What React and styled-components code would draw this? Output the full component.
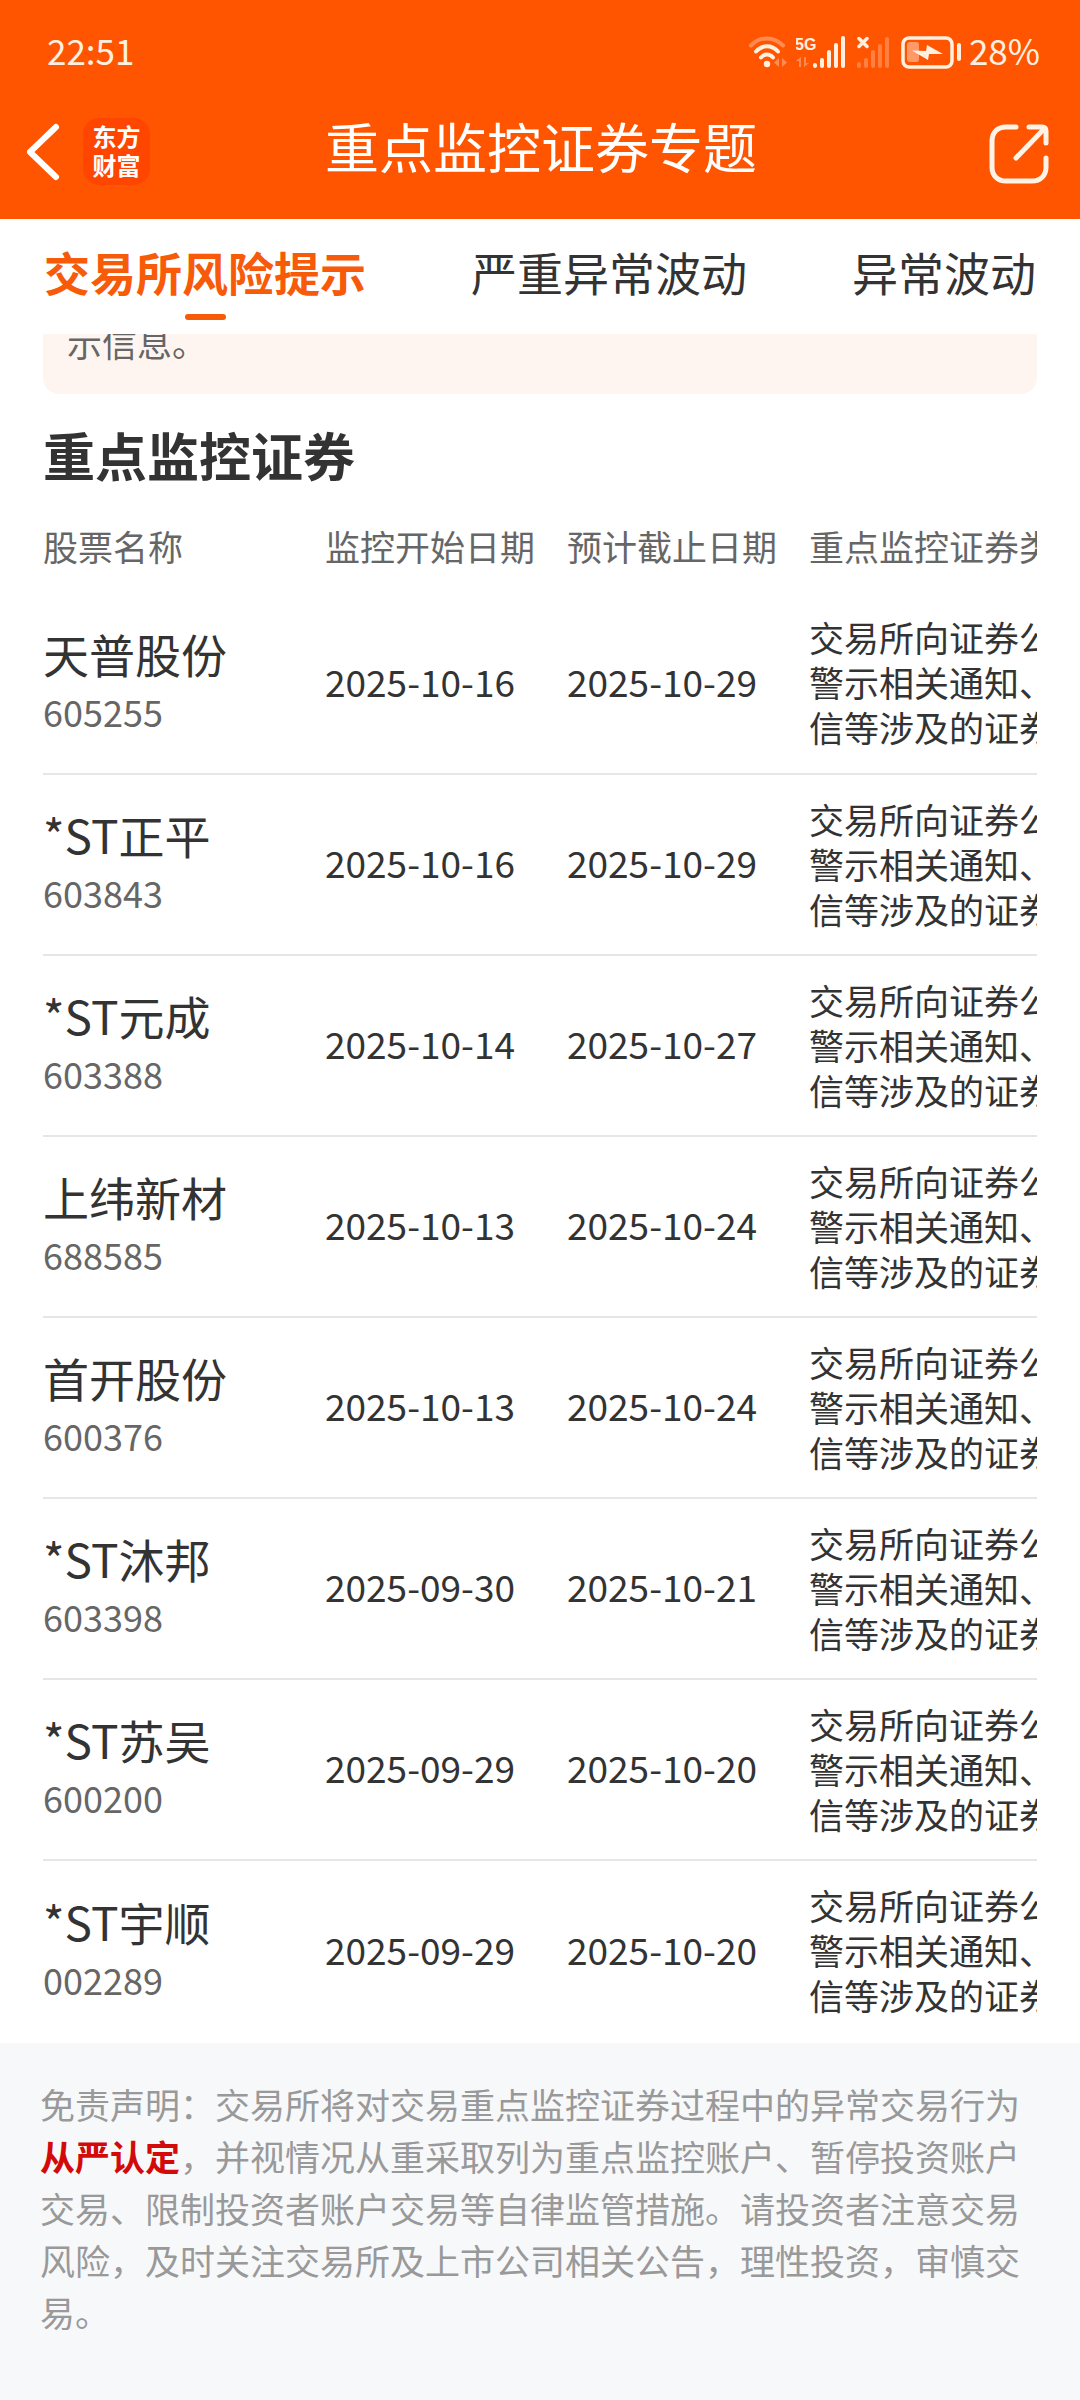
import React, { useState } from 'react';
import styled, { createGlobalStyle } from 'styled-components';

const TABS = ['交易所风险提示', '严重异常波动', '异常波动'];

const STOCKS = [
  { name: '天普股份', code: '605255', start: '2025-10-16', end: '2025-10-29' },
  { name: '*ST正平', code: '603843', start: '2025-10-16', end: '2025-10-29' },
  { name: '*ST元成', code: '603388', start: '2025-10-14', end: '2025-10-27' },
  { name: '上纬新材', code: '688585', start: '2025-10-13', end: '2025-10-24' },
  { name: '首开股份', code: '600376', start: '2025-10-13', end: '2025-10-24' },
  { name: '*ST沐邦', code: '603398', start: '2025-09-30', end: '2025-10-21' },
  { name: '*ST苏吴', code: '600200', start: '2025-09-29', end: '2025-10-20' },
  { name: '*ST宇顺', code: '002289', start: '2025-09-29', end: '2025-10-20' },
];

const WifiIcon = () => (
  <svg width="40" height="40" viewBox="0 0 40 40" fill="none" strokeLinecap="round" strokeWidth="4">
    <path d="M3 15.5C12 6 26 6 35 15.5" stroke="#ff8a52" />
    <path d="M8 21.5C14.5 14.5 23.5 14.5 30 21.5" stroke="#fff0e0" />
    <path d="M13 27.5C16.5 23.5 21.5 23.5 25 27.5" stroke="#fff0e0" />
    <circle cx="19" cy="34" r="3.2" fill="#fff0e0" />
    <path d="M31 28v9l-5-4.5zM34 28v9l5-4.5z" fill="#ff8a52" />
  </svg>
);

const SignalIcon = () => (
  <svg width="53" height="40" viewBox="0 0 53 40" fill="#fff0e0">
    <text x="-1" y="20" fontFamily="'Liberation Sans Narrow', 'Liberation Sans', sans-serif" fontSize="16" fontWeight="700">
      5G
    </text>
    <path d="M5 27v10h-2v-6h-3zM8 37v-10h2v6h3z" fill="#ff8a52" />
    <rect x="17" y="33" width="4" height="5" rx="2" />
    <rect x="24" y="28" width="4" height="10" rx="2" />
    <rect x="31" y="20" width="4" height="18" rx="2" />
    <rect x="38" y="13" width="4" height="25" rx="2" />
    <rect x="45" y="6" width="4" height="32" rx="2" />
  </svg>
);

const NoSignalIcon = () => (
  <svg width="35" height="40" viewBox="0 0 35 40" fill="#ff8040">
    <path d="M2 8.500l8 8M10 8.500l-8 8" stroke="#fff0e0" strokeWidth="3.500" strokeLinecap="round" />
    <rect x="0" y="32" width="4" height="6" rx="2" />
    <rect x="7" y="28" width="4" height="10" rx="2" />
    <rect x="14" y="20" width="4" height="18" rx="2" />
    <rect x="21" y="14" width="4" height="24" rx="2" />
    <rect x="28" y="7" width="4" height="31" rx="2" />
  </svg>
);

const BatteryIcon = () => (
  <svg width="61" height="40" viewBox="0 0 61 40">
    <rect x="3" y="8" width="49" height="29" rx="6" fill="none" stroke="#fff0e0" strokeWidth="3.500" />
    <rect x="7" y="12" width="12" height="20" rx="3" fill="#ff9a68" />
    <path d="M12 20.500l14 .5 1-6 16 9-14 0-1 6z" fill="#fff0e0" />
    <rect x="57" y="13" width="4" height="18" rx="2" fill="#fff0e0" />
  </svg>
);

const BackIcon = () => (
  <svg width="36" height="60" viewBox="0 0 36 60" fill="none" stroke="#fff" strokeWidth="6" strokeLinecap="round" strokeLinejoin="round">
    <path d="M31 5L5 30l26 25" />
  </svg>
);

const ShareIcon = () => (
  <svg width="60" height="66" viewBox="0 0 60 66" fill="none" stroke="#fff3e8" strokeWidth="5" strokeLinecap="round" strokeLinejoin="round">
    <path d="M27 8H17C8.500 8 3 13.500 3 22v26c0 8.500 5.500 14 14 14h26c8.500 0 14-5.500 14-14V39" />
    <path d="M40 8h13c2.500 0 4 1.500 4 4v12" />
    <path d="M55 10L27 39" />
  </svg>
);

const App = () => {
  const [active, setActive] = useState(0);

  return (
    <Page>
      <GlobalStyle />
      <Header>
        <StatusBar>
          <span>22:51</span>
          <StatusIcons>
            <WifiIcon />
            <SignalIcon />
            <NoSignalIcon />
            <BatteryIcon />
            <span>28%</span>
          </StatusIcons>
        </StatusBar>
        <NavBar>
          <NavLeft>
            <IconButton aria-label="返回">
              <BackIcon />
            </IconButton>
            <Logo>
              <span>东方</span>
              <span>财富</span>
            </Logo>
          </NavLeft>
          <Title>重点监控证券专题</Title>
          <NavRight>
            <IconButton aria-label="分享">
              <ShareIcon />
            </IconButton>
          </NavRight>
        </NavBar>
      </Header>

      <Tabs role="tablist">
        {TABS.map((tab, i) => (
          <Tab
            key={tab}
            role="tab"
            aria-selected={i === active}
            $active={i === active}
            onClick={() => setActive(i)}
          >
            {tab}
          </Tab>
        ))}
      </Tabs>

      <Main>
        <Notice>
          <p>示信息。</p>
        </Notice>
        <SectionTitle>重点监控证券</SectionTitle>
        <TableScroll>
          <Table>
            <colgroup>
              <Col $width={282} />
              <Col $width={242} />
              <Col $width={242} />
              <Col $width={250} />
            </colgroup>
            <thead>
              <tr>
                <HeadCell>股票名称</HeadCell>
                <HeadCell>监控开始日期</HeadCell>
                <HeadCell>预计截止日期</HeadCell>
                <HeadCell>重点监控证券类</HeadCell>
              </tr>
            </thead>
            <tbody>
              {STOCKS.map((stock) => (
                <Row key={stock.code}>
                  <NameCell>
                    <StockName>{stock.name}</StockName>
                    <StockCode>{stock.code}</StockCode>
                  </NameCell>
                  <DateCell>{stock.start}</DateCell>
                  <DateCell>{stock.end}</DateCell>
                  <Cell>
                    交易所向证券公
                    <br />
                    警示相关通知、
                    <br />
                    信等涉及的证券
                  </Cell>
                </Row>
              ))}
            </tbody>
          </Table>
        </TableScroll>
      </Main>

      <Disclaimer>
        免责声明：交易所将对交易重点监控证券过程中的异常交易行为
        <Warn>从严认定</Warn>
        ，并视情况从重采取列为重点监控账户、暂停投资账户交易、限制投资者账户交易等自律监管措施。请投资者注意交易风险，及时关注交易所及上市公司相关公告，理性投资，审慎交易。
      </Disclaimer>
    </Page>
  );
};

export default App;

// -----------STYLED COMPONENTS---------

const GlobalStyle = createGlobalStyle`
  * {
    box-sizing: border-box;
  }
  body {
    margin: 0;
    background: #f7f8fa;
    font-family: 'Noto Sans CJK SC', sans-serif;
    color: #333;
  }
  button {
    padding: 0;
    border: 0;
    background: none;
    font: inherit;
    color: inherit;
    cursor: pointer;
  }
  svg {
    display: block;
  }
  h1, h2, p {
    margin: 0;
  }
`;

const Page = styled.div`
  display: flex;
  flex-direction: column;
  min-height: 100vh;
`;

const Header = styled.header`
  background: #ff5500;
  color: #fff;
`;

const StatusBar = styled.div`
  display: flex;
  align-items: center;
  justify-content: space-between;
  height: 84px;
  padding: 16px 40px 0 47px;
  font-size: 35px;
  line-height: 52px;
  color: #fff0e0;
`;

const StatusIcons = styled.div`
  display: flex;
  align-items: center;
  gap: 8px;
`;

const NavBar = styled.div`
  display: grid;
  grid-template-columns: 1fr auto 1fr;
  align-items: center;
  height: 135px;
  padding: 0 31px 0 25px;
`;

const NavLeft = styled.div`
  display: flex;
  align-items: center;
  gap: 22px;
`;

const NavRight = styled.div`
  display: flex;
  justify-content: flex-end;
`;

const IconButton = styled.button`
  display: flex;
`;

const Logo = styled.div`
  display: flex;
  flex-direction: column;
  align-items: center;
  justify-content: center;
  width: 67px;
  height: 67px;
  padding-bottom: 4px;
  border-radius: 16px;
  background: #ff4600;
  font-size: 24px;
  font-weight: 700;
  line-height: 29px;
`;

const Title = styled.h1`
  padding: 0 0 12px 8px;
  font-size: 54px;
  font-weight: 400;
  line-height: 72px;
`;

const Tabs = styled.div`
  display: flex;
  align-items: flex-start;
  justify-content: space-between;
  padding: 20px 44px 14px;
  background: #fff;
`;

const Tab = styled.button`
  font-size: 46px;
  line-height: 64px;
  font-weight: ${(props) => (props.$active ? 700 : 400)};
  color: ${(props) => (props.$active ? '#f75a08' : '#333')};

  &::after {
    content: '';
    display: block;
    width: 41px;
    height: 6px;
    margin: 11px auto 0;
    border-radius: 3px;
    background: ${(props) => (props.$active ? '#f75a08' : 'transparent')};
  }
`;

const Main = styled.main`
  padding: 0 43px 2px;
  background: #fff;
`;

const Notice = styled.div`
  display: flex;
  align-items: flex-end;
  height: 60px;
  padding: 0 24px 26px;
  overflow: hidden;
  border-radius: 0 0 16px 16px;
  background: #fff5f0;
  font-size: 35px;
  line-height: 52px;
  color: #666;
`;

const SectionTitle = styled.h2`
  padding: 25px 0 23px;
  font-size: 52px;
  font-weight: 700;
  line-height: 72px;
`;

const TableScroll = styled.div`
  overflow-x: auto;
  scrollbar-width: none;
`;

const Table = styled.table`
  width: 1016px;
  table-layout: fixed;
  border-collapse: collapse;
  text-align: left;
  white-space: nowrap;
`;

const Col = styled.col`
  width: ${(props) => props.$width}px;
`;

const HeadCell = styled.th`
  height: 79px;
  padding: 0 0 15px;
  font-size: 35px;
  font-weight: 400;
  line-height: 52px;
  color: #666;
`;

const Row = styled.tr`
  height: 181px;

  & + & {
    border-top: 2px solid #e6e6e6;
  }
`;

const Cell = styled.td`
  padding: 0 0 3px;
  font-size: 35px;
  line-height: 45px;
  vertical-align: middle;
`;

const NameCell = styled(Cell)`
  padding-bottom: 16px;
`;

const DateCell = styled(Cell)`
  padding-bottom: 4px;
  font-size: 37px;
`;

const StockName = styled.div`
  font-size: 46px;
  line-height: 72px;
`;

const StockCode = styled.div`
  font-size: 36px;
  line-height: 45px;
  color: #666;
`;

const Disclaimer = styled.footer`
  flex: 1;
  padding: 35px 40px;
  background: #f7f8fa;
  font-size: 35px;
  line-height: 52px;
  color: #999;
`;

const Warn = styled.strong`
  font-weight: 700;
  color: #d20a0a;
`;
